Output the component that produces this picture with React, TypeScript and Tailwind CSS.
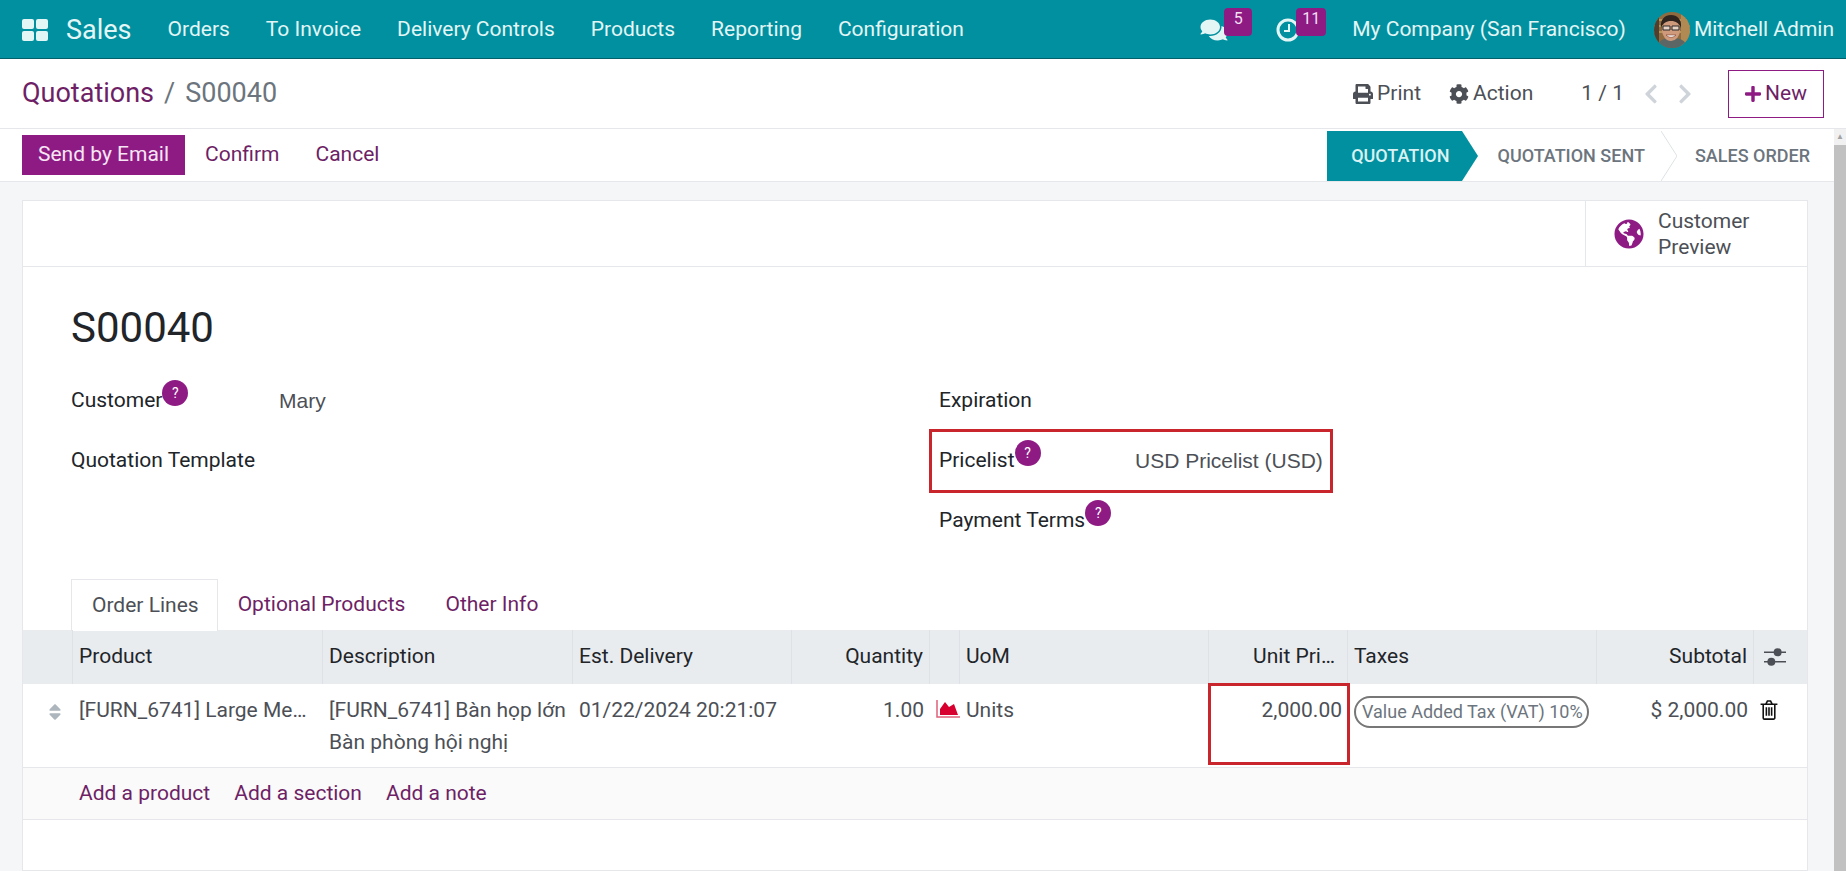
import React from 'react';
import {
  FaChevronLeft,
  FaChevronRight,
  FaCog,
  FaComments,
  FaGlobeAmericas,
  FaPlus,
  FaPrint,
  FaSort,
} from 'react-icons/fa';

const navItems = ['Orders', 'To Invoice', 'Delivery Controls', 'Products', 'Reporting', 'Configuration'];

const rowGrid =
  'grid grid-cols-[50px_250px_250px_219px_138px_30px_249px_139px_249px_157px_1fr]';

const Help = () => (
  <span className="relative -top-2 flex h-6.5 w-6.5 shrink-0 items-center justify-center rounded-full bg-[#8e1b84] text-sm text-white">
    ?
  </span>
);

const Avatar = () => (
  <svg viewBox="0 0 36 36" className="h-9 w-9 rounded-full">
    <rect width="36" height="36" fill="#8f6b3f" />
    <path d="M0 8h36M0 14h36M0 20h36" stroke="#b8935a" strokeWidth="2" />
    <rect x="27" width="9" height="36" fill="#b08a52" />
    <rect width="5" height="36" fill="#4d4030" />
    <path d="M3 36c1-8 7-10 15-10s14 2 15 10z" fill="#5c6665" />
    <ellipse cx="17" cy="18" rx="9" ry="11" fill="#cf9a7c" />
    <path d="M7 16C6 7 11 3 17 3s11 4 10 13c-2-5-5-7-10-7s-8 2-10 7z" fill="#2f241e" />
    <path d="M9 14h7v4H9zM18 14h7v4h-7z" fill="#e8d2c4" stroke="#2b2b2b" strokeWidth="1" />
    <path d="M12 23c3 3 7 3 10 0z" fill="#fff" stroke="#7a3a2a" strokeWidth="0.6" />
  </svg>
);

const NavBar = () => (
  <div className="box-content flex h-14 shrink-0 items-center border-b border-[#01606a] bg-[#01909f] pl-5.5 pr-3 pt-0.5 text-[#e3f6f6]">
    <svg viewBox="0 0 26 22" className="h-5.5 w-6.5" fill="currentColor">
      <rect width="12" height="10" rx="2" />
      <rect x="14" width="12" height="10" rx="2" />
      <rect y="12" width="12" height="10" rx="2" />
      <rect x="14" y="12" width="12" height="10" rx="2" />
    </svg>
    <span className="ml-4.5 text-[27px]">Sales</span>
    <div className="ml-9 flex gap-9">
      {navItems.map((item) => (
        <span key={item}>{item}</span>
      ))}
    </div>
    <div className="ml-auto flex items-center">
      <div className="relative mr-12 h-6 w-7">
        <FaComments className="h-6 w-7" />
        <span className="absolute -top-2.5 left-6 flex h-7 w-7 justify-center rounded-sm bg-[#8e1b84] text-base leading-5.5 text-[#f3dff1]">
          5
        </span>
      </div>
      <div className="relative mr-13 h-6 w-6">
        <svg viewBox="0 0 24 24" className="h-6 w-6" fill="none" stroke="currentColor">
          <circle cx="12" cy="12" r="10" strokeWidth="3" />
          <path d="M13 6v7H8" strokeWidth="2" />
        </svg>
        <span className="absolute -top-2.5 left-5 flex h-7 w-7.5 justify-center rounded-sm bg-[#8e1b84] text-base leading-5.5 text-[#f3dff1]">
          11
        </span>
      </div>
      <span>My Company (San Francisco)</span>
      <span className="ml-7">
        <Avatar />
      </span>
      <span className="ml-1">Mitchell Admin</span>
    </div>
  </div>
);

const Breadcrumbs = () => (
  <div className="flex h-17.5 shrink-0 items-center border-b border-gray-200 bg-white px-5.5 text-[#4c5056]">
    <span className="text-[27px] text-[#6e1f66]">Quotations</span>
    <span className="mx-2.5 text-[27px] text-[#6c757d]">/</span>
    <span className="text-[27px] text-[#6c757d]">S00040</span>
    <div className="ml-auto flex items-center">
      <FaPrint className="h-5 w-5" />
      <span className="ml-1">Print</span>
      <FaCog className="ml-7 h-5 w-5" />
      <span className="ml-1">Action</span>
      <span className="ml-12">1 / 1</span>
      <FaChevronLeft className="ml-5 h-5.5 w-3.5 text-[#ced4da]" />
      <FaChevronRight className="ml-5 h-5.5 w-3.5 text-[#ced4da]" />
      <button className="ml-9 flex h-12 w-24 items-center justify-center gap-1 border border-[#8e1b84] text-[#6e1f66]">
        <FaPlus className="h-5 w-4 text-[#8e1b84]" />
        New
      </button>
    </div>
  </div>
);

const StatusBar = () => (
  <div className="box-content flex h-13 shrink-0 items-center border-b border-gray-200 bg-white pl-5.5">
    <button className="flex h-10 items-center bg-[#8e1b84] px-4 text-[#f6e6f4]">Send by Email</button>
    <span className="ml-5 text-[#6e1f66]">Confirm</span>
    <span className="ml-9 text-[#6e1f66]">Cancel</span>
    <div className="ml-auto flex h-12.5 items-center self-end pr-6 text-lg font-medium uppercase text-[#6c757d]">
      <div className="flex h-full items-center bg-[#01909f] pl-6 pr-3 text-[#d9f2f3]">Quotation</div>
      <svg viewBox="0 0 16 50" className="h-full w-4" fill="#01909f">
        <path d="M0 0l16 25L0 50z" />
      </svg>
      <span className="ml-5">Quotation Sent</span>
      <svg viewBox="0 0 16 50" className="ml-4 h-full w-4" fill="none" stroke="#dee2e6">
        <path d="M0 0l16 25L0 50" />
      </svg>
      <span className="ml-4.5">Sales Order</span>
    </div>
  </div>
);

const Field = ({ label, help }: { label: string; help?: boolean }) => (
  <div className="flex h-15 items-center">
    <span>{label}</span>
    {help && <Help />}
  </div>
);

const headers = [
  { label: '' },
  { label: 'Product' },
  { label: 'Description' },
  { label: 'Est. Delivery' },
  { label: 'Quantity', right: true },
  { label: '' },
  { label: 'UoM' },
  { label: 'Unit Pri…', right: true, clipped: true },
  { label: 'Taxes' },
  { label: 'Subtotal', right: true },
];

const OrderTable = () => (
  <div>
    <div className={`${rowGrid} h-13.5 items-stretch bg-[#e9ecef] text-[#212529]`}>
      {headers.map((h, i) => (
        <div
          key={i}
          className={`flex items-center border-r border-[#dee2e6] ${h.clipped ? 'pl-1.5 pr-3' : 'px-1.5'} ${h.right ? 'justify-end' : ''}`}
        >
          {h.label}
        </div>
      ))}
      <div className="flex items-center pl-2.5">
        <svg viewBox="0 0 21 17" className="h-4.5 w-5.5" fill="#4c5056">
          <path d="M0 4h21M0 13h21" stroke="#4c5056" strokeWidth="1.4" />
          <circle cx="13" cy="4" r="3.8" />
          <circle cx="7" cy="13" r="3.8" />
        </svg>
      </div>
    </div>
    <div className={`${rowGrid} h-21 border-b border-gray-200 text-[#4c5056]`}>
      <div className="flex justify-end pr-2.5 pt-4.5">
        <FaSort className="h-5 w-4 text-[#adb5bd]" />
      </div>
      <div className="px-1.5 pt-2.5 leading-8">[FURN_6741] Large Me…</div>
      <div className="whitespace-nowrap px-1.5 pt-2.5 leading-8">
        [FURN_6741] Bàn họp lớn
        <br />
        Bàn phòng hội nghị
      </div>
      <div className="whitespace-nowrap px-1.5 pt-2.5 leading-8">01/22/2024 20:21:07</div>
      <div className="px-1.5 pt-2.5 text-right leading-8">1.00</div>
      <div className="pl-1.5 pt-4">
        <svg viewBox="0 0 24 18" className="h-4.5 w-6">
          <path d="M1 0v17h23" fill="none" stroke="#e0607a" strokeWidth="1.5" />
          <path d="M4 15V9l5-7 4 5 5-3 4 11z" fill="#d8002e" />
        </svg>
      </div>
      <div className="px-1.5 pt-2.5 leading-8">Units</div>
      <div className="relative px-1.5 pt-2.5 text-right leading-8">
        2,000.00
        <div className="absolute -left-px -top-px h-20.5 w-35.5 border-3 border-[#c9252d]" />
      </div>
      <div className="px-1.5 pt-3">
        <span className="inline-block h-8 whitespace-nowrap rounded-full border-2 border-[#777] pl-1.5 pr-1 text-lg leading-7 text-[#6c757d]">
          Value Added Tax (VAT) 10%
        </span>
      </div>
      <div className="whitespace-nowrap px-1.5 pt-2.5 text-right leading-8">$ 2,000.00</div>
      <div className="pl-1.5 pt-4">
        <svg viewBox="0 0 16 19" className="h-5 w-4.5" fill="none" stroke="#111" strokeWidth="1.5">
          <path d="M0 4h16M5 4l1.5-3h3L11 4M2.5 4v13a1.2 1.2 0 0 0 1.2 1.2h8.6a1.2 1.2 0 0 0 1.2-1.2V4M5.5 7v8M8 7v8M10.5 7v8" />
        </svg>
      </div>
    </div>
    <div className="flex h-13 items-center gap-6 border-b border-gray-200 bg-[#fafafa] pl-14 text-[#6e1f66]">
      <span>Add a product</span>
      <span>Add a section</span>
      <span>Add a note</span>
    </div>
  </div>
);

export default function App() {
  return (
    <div className="flex h-screen flex-col overflow-hidden bg-white font-['Roboto',sans-serif] text-[21px] text-[#212529]">
      <NavBar />
      <Breadcrumbs />
      <div className="flex min-h-0 flex-1">
        <div className="flex min-w-0 flex-1 flex-col bg-[#f4f6f8]">
          <StatusBar />
          <div className="flex-1 pl-5.5 pr-6.5 pt-4.5">
            <div className="h-full border border-gray-200 bg-white">
              <div className="flex h-16.5 justify-end border-b border-gray-200">
                <div className="flex w-55.5 items-center gap-3.5 border-l border-gray-200 pl-7 leading-6.5 text-[#4c5056]">
                  <FaGlobeAmericas className="h-7.5 w-7.5 text-[#8e1b84]" />
                  <span>
                    Customer
                    <br />
                    Preview
                  </span>
                </div>
              </div>
              <div className="px-12 pt-9">
                <h1 className="text-[42px] leading-12.5">S00040</h1>
                <div className="mt-4.5 grid h-52 grid-cols-2">
                  <div>
                    <div className="flex h-15 items-center">
                      <span className="flex w-52 items-center">
                        Customer
                        <Help />
                      </span>
                      <span className="font-['Liberation_Sans'] text-[#4c5056]">Mary</span>
                    </div>
                    <Field label="Quotation Template" />
                  </div>
                  <div className="pl-6">
                    <Field label="Expiration" />
                    <div className="relative flex h-15 items-center">
                      <span className="flex w-49 items-center">
                        Pricelist
                        <Help />
                      </span>
                      <span className="whitespace-nowrap font-['Liberation_Sans'] text-[#4c5056]">
                        USD Pricelist (USD)
                      </span>
                      <div className="absolute -left-2.5 -top-0.5 h-16 w-101 border-3 border-[#c9252d]" />
                    </div>
                    <Field label="Payment Terms" help />
                  </div>
                </div>
                <div className="-mb-px flex h-13 items-center">
                  <div className="flex h-full items-center border-x border-t border-gray-200 bg-white pl-5 pr-4.5 text-[#4c5056]">
                    Order Lines
                  </div>
                  <div className="px-5 text-[#6e1f66]">Optional Products</div>
                  <div className="px-5 text-[#6e1f66]">Other Info</div>
                </div>
              </div>
              <OrderTable />
            </div>
          </div>
        </div>
        <div className="flex w-3 shrink-0 flex-col bg-[#f1f1f1]">
          <div className="flex h-4 items-center justify-center text-[8px] leading-none text-[#a3a3a3]">▲</div>
          <div className="flex-1 bg-[#c1c1c1]" />
        </div>
      </div>
    </div>
  );
}
